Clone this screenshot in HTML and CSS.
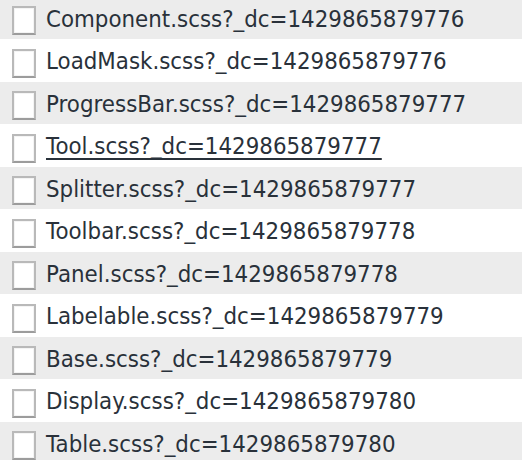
FILE: index.html
```html
<!DOCTYPE html>
<html>
<head>
<meta charset="utf-8">
<link rel="stylesheet" href="styles.css">
</head>
<body>
<ul class="files">
  <li class="row alt"><span class="box"></span><span class="name">Component.scss?_dc=1429865879776</span></li>
  <li class="row"><span class="box"></span><span class="name">LoadMask.scss?_dc=1429865879776</span></li>
  <li class="row alt"><span class="box"></span><span class="name">ProgressBar.scss?_dc=1429865879777</span></li>
  <li class="row"><span class="box"></span><span class="name hover">Tool.scss?_dc=1429865879777</span></li>
  <li class="row alt"><span class="box"></span><span class="name">Splitter.scss?_dc=1429865879777</span></li>
  <li class="row"><span class="box"></span><span class="name">Toolbar.scss?_dc=1429865879778</span></li>
  <li class="row alt"><span class="box"></span><span class="name">Panel.scss?_dc=1429865879778</span></li>
  <li class="row"><span class="box"></span><span class="name">Labelable.scss?_dc=1429865879779</span></li>
  <li class="row alt"><span class="box"></span><span class="name">Base.scss?_dc=1429865879779</span></li>
  <li class="row"><span class="box"></span><span class="name">Display.scss?_dc=1429865879780</span></li>
  <li class="row alt"><span class="box"></span><span class="name">Table.scss?_dc=1429865879780</span></li>
</ul>
</body>
</html>
```

FILE: styles.css
```css
html, body {
  margin: 0;
  padding: 0;
  background: #ffffff;
  overflow: hidden;
}

.files {
  list-style: none;
  margin: -3.5px 0 0 0;
  padding: 0;
  font-family: "DejaVu Sans", sans-serif;
  font-size: 23px;
  color: #29313a;
}

.row {
  height: 42.5px;
  display: flex;
  align-items: flex-start;
  padding-left: 12px;
  background: #ffffff;
  overflow: hidden;
}

.row.alt {
  background: #ececec;
}

.box {
  flex: none;
  width: 24px;
  height: 29px;
  margin-top: 9.5px;
  box-sizing: border-box;
  background: #ffffff;
  border: 2px solid #b9b9b9;
  border-bottom-color: #9c9c9c;
  box-shadow: inset 0 0 0 1px #f4f4f4;
}

.name {
  display: inline-block;
  margin-left: 10px;
  padding-top: 1px;
  line-height: 42.5px;
  white-space: nowrap;
  transform: scaleX(0.93);
  transform-origin: left center;
}

.name.hover {
  text-decoration: underline;
  text-decoration-thickness: 2px;
  text-underline-offset: 4px;
}
```
